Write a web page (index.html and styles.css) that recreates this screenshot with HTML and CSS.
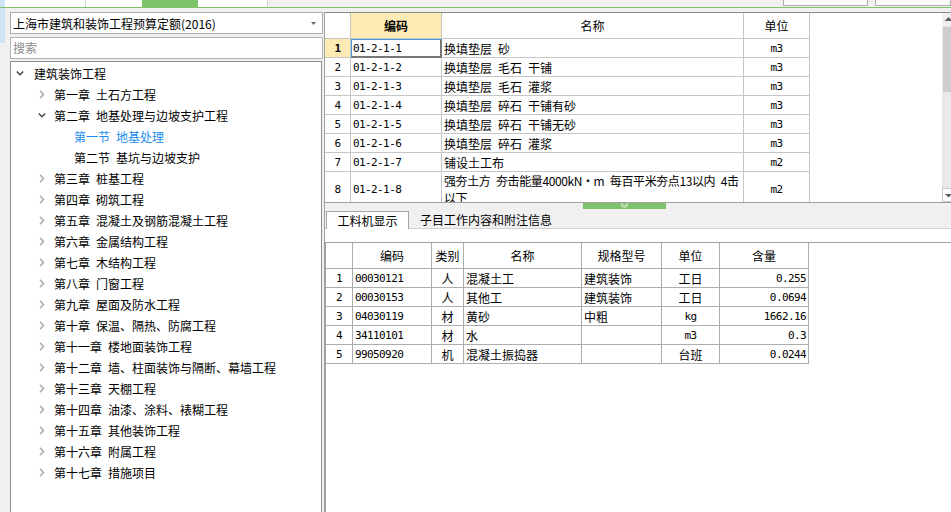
FILE: index.html
```html
<!DOCTYPE html>
<html lang="zh-CN">
<head>
<meta charset="utf-8">
<title>定额</title>
<link rel="stylesheet" href="styles.css">
</head>
<body>
<div class="app">
  <div class="topbar">
    <div class="tb-blue"></div>
    <div class="tb-white w80"></div>
    <div class="tb-sep"></div>
    <div class="tb-white w56"></div>
    <div class="tb-green"></div>
    <div class="tb-white w70"></div>
    <div class="tb-btn b1"></div>
    <div class="tb-btn b2"></div>
  </div>
  <div class="greenline"></div>
  <div class="main">
    <div class="left">
      <div class="combo"><span>上海市建筑和装饰工程预算定额(2016)</span><svg width="5" height="3" viewBox="0 0 5 3"><polygon points="0,0 5,0 2.5,3" fill="#6a6a6a"/></svg></div>
      <div class="search">搜索</div>
      <div class="tree">
        <div class="node l0"><svg viewBox="0 0 8 9"><polyline class="ex" points="0.8,2.5 4,5.7 7.2,2.5"/></svg>建筑装饰工程</div>
        <div class="node l1"><svg viewBox="0 0 8 9"><polyline class="co" points="2,0.8 5.5,4.5 2,8.2"/></svg>第一章&ensp;土石方工程</div>
        <div class="node l1"><svg viewBox="0 0 8 9"><polyline class="ex" points="0.8,2.5 4,5.7 7.2,2.5"/></svg>第二章&ensp;地基处理与边坡支护工程</div>
        <div class="node l2 sel">第一节&ensp;地基处理</div>
        <div class="node l2">第二节&ensp;基坑与边坡支护</div>
        <div class="node l1"><svg viewBox="0 0 8 9"><polyline class="co" points="2,0.8 5.5,4.5 2,8.2"/></svg>第三章&ensp;桩基工程</div>
        <div class="node l1"><svg viewBox="0 0 8 9"><polyline class="co" points="2,0.8 5.5,4.5 2,8.2"/></svg>第四章&ensp;砌筑工程</div>
        <div class="node l1"><svg viewBox="0 0 8 9"><polyline class="co" points="2,0.8 5.5,4.5 2,8.2"/></svg>第五章&ensp;混凝土及钢筋混凝土工程</div>
        <div class="node l1"><svg viewBox="0 0 8 9"><polyline class="co" points="2,0.8 5.5,4.5 2,8.2"/></svg>第六章&ensp;金属结构工程</div>
        <div class="node l1"><svg viewBox="0 0 8 9"><polyline class="co" points="2,0.8 5.5,4.5 2,8.2"/></svg>第七章&ensp;木结构工程</div>
        <div class="node l1"><svg viewBox="0 0 8 9"><polyline class="co" points="2,0.8 5.5,4.5 2,8.2"/></svg>第八章&ensp;门窗工程</div>
        <div class="node l1"><svg viewBox="0 0 8 9"><polyline class="co" points="2,0.8 5.5,4.5 2,8.2"/></svg>第九章&ensp;屋面及防水工程</div>
        <div class="node l1"><svg viewBox="0 0 8 9"><polyline class="co" points="2,0.8 5.5,4.5 2,8.2"/></svg>第十章&ensp;保温、隔热、防腐工程</div>
        <div class="node l1"><svg viewBox="0 0 8 9"><polyline class="co" points="2,0.8 5.5,4.5 2,8.2"/></svg>第十一章&ensp;楼地面装饰工程</div>
        <div class="node l1"><svg viewBox="0 0 8 9"><polyline class="co" points="2,0.8 5.5,4.5 2,8.2"/></svg>第十二章&ensp;墙、柱面装饰与隔断、幕墙工程</div>
        <div class="node l1"><svg viewBox="0 0 8 9"><polyline class="co" points="2,0.8 5.5,4.5 2,8.2"/></svg>第十三章&ensp;天棚工程</div>
        <div class="node l1"><svg viewBox="0 0 8 9"><polyline class="co" points="2,0.8 5.5,4.5 2,8.2"/></svg>第十四章&ensp;油漆、涂料、裱糊工程</div>
        <div class="node l1"><svg viewBox="0 0 8 9"><polyline class="co" points="2,0.8 5.5,4.5 2,8.2"/></svg>第十五章&ensp;其他装饰工程</div>
        <div class="node l1"><svg viewBox="0 0 8 9"><polyline class="co" points="2,0.8 5.5,4.5 2,8.2"/></svg>第十六章&ensp;附属工程</div>
        <div class="node l1"><svg viewBox="0 0 8 9"><polyline class="co" points="2,0.8 5.5,4.5 2,8.2"/></svg>第十七章&ensp;措施项目</div>
      </div>
    </div>
    <div class="right">
      <div class="grid-top">
        <div class="gt-body">
          <div class="gt-table">
            <div class="hd"></div>
            <div class="hd ycode">编码</div>
            <div class="hd">名称</div>
            <div class="hd">单位</div>

            <div class="num cur mono">1</div>
            <div class="code mono focus">01-2-1-1</div>
            <div class="name">换填垫层&ensp;砂</div>
            <div class="unit mono">m3</div>

            <div class="num mono">2</div>
            <div class="code mono">01-2-1-2</div>
            <div class="name">换填垫层&ensp;毛石&ensp;干铺</div>
            <div class="unit mono">m3</div>

            <div class="num mono">3</div>
            <div class="code mono">01-2-1-3</div>
            <div class="name">换填垫层&ensp;毛石&ensp;灌浆</div>
            <div class="unit mono">m3</div>

            <div class="num mono">4</div>
            <div class="code mono">01-2-1-4</div>
            <div class="name">换填垫层&ensp;碎石&ensp;干铺有砂</div>
            <div class="unit mono">m3</div>

            <div class="num mono">5</div>
            <div class="code mono">01-2-1-5</div>
            <div class="name">换填垫层&ensp;碎石&ensp;干铺无砂</div>
            <div class="unit mono">m3</div>

            <div class="num mono">6</div>
            <div class="code mono">01-2-1-6</div>
            <div class="name">换填垫层&ensp;碎石&ensp;灌浆</div>
            <div class="unit mono">m3</div>

            <div class="num mono">7</div>
            <div class="code mono">01-2-1-7</div>
            <div class="name">铺设土工布</div>
            <div class="unit mono">m2</div>

            <div class="num mono">8</div>
            <div class="code mono">01-2-1-8</div>
            <div class="name wrap">强夯土方&ensp;夯击能量4000kN·m&ensp;每百平米夯点13以内&ensp;4击<br>以下</div>
            <div class="unit mono">m2</div>
          </div>
        </div>
        <div class="vscroll">
          <div class="vs-up"><svg width="9" height="13" viewBox="0 0 9 13"><polygon points="2.5,8 6.5,4 10.5,8" fill="#5f5f5f"/></svg></div>
          <div class="vs-thumb"></div>
          <div class="vs-track"></div>
          <div class="vs-down"><svg width="8" height="12" viewBox="0 0 8 12"><polygon points="2,5 9,5 5.5,8.5" fill="#5f5f5f"/></svg></div>
        </div>
      </div>
      <div class="splitter">
        <div class="handle"><svg width="9" height="5" viewBox="0 0 9 5"><polyline points="1,0.5 4.5,2.5 8,0.5" /><polyline points="1,2.5 4.5,4.5 8,2.5" /></svg></div>
      </div>
      <div class="tabs">
        <div class="tab active">工料机显示</div>
        <div class="tab">子目工作内容和附注信息</div>
      </div>
      <div class="panel">
        <div class="grid-bot">
          <div class="gb-table">
            <div class="bh"></div>
            <div class="bh">编码</div>
            <div class="bh">类别</div>
            <div class="bh">名称</div>
            <div class="bh">规格型号</div>
            <div class="bh">单位</div>
            <div class="bh">含量</div>

            <div class="bnum mono">1</div>
            <div class="bcode mono">00030121</div>
            <div class="bcat">人</div>
            <div class="btxt">混凝土工</div>
            <div class="btxt">建筑装饰</div>
            <div class="bunit">工日</div>
            <div class="bqty mono">0.255</div>

            <div class="bnum mono">2</div>
            <div class="bcode mono">00030153</div>
            <div class="bcat">人</div>
            <div class="btxt">其他工</div>
            <div class="btxt">建筑装饰</div>
            <div class="bunit">工日</div>
            <div class="bqty mono">0.0694</div>

            <div class="bnum mono">3</div>
            <div class="bcode mono">04030119</div>
            <div class="bcat">材</div>
            <div class="btxt">黄砂</div>
            <div class="btxt">中粗</div>
            <div class="bunit mono">kg</div>
            <div class="bqty mono">1662.16</div>

            <div class="bnum mono">4</div>
            <div class="bcode mono">34110101</div>
            <div class="bcat">材</div>
            <div class="btxt">水</div>
            <div class="btxt"></div>
            <div class="bunit mono">m3</div>
            <div class="bqty mono">0.3</div>

            <div class="bnum mono">5</div>
            <div class="bcode mono">99050920</div>
            <div class="bcat">机</div>
            <div class="btxt">混凝土振捣器</div>
            <div class="btxt"></div>
            <div class="bunit">台班</div>
            <div class="bqty mono">0.0244</div>
          </div>
        </div>
      </div>
    </div>
  </div>
</div>
</body>
</html>
```

FILE: styles.css
```css
* { box-sizing: border-box; }
html, body { margin: 0; padding: 0; }
body {
  width: 951px;
  height: 512px;
  overflow: hidden;
  background: #f0f0f0;
  font-family: "Noto Sans CJK SC", "Noto Sans", sans-serif;
  font-size: 12px;
  color: #000;
}
.app { display: flex; flex-direction: column; height: 512px; overflow: hidden; }

/* top strip */
.topbar { display: flex; height: 7px; flex: none; background: #f0f0f0; }
.tb-blue { width: 5px; background: #cfe4f5; }
.tb-white { background: #fff; }
.w80 { width: 80px; }
.w56 { width: 56px; }
.w70 { width: 70px; border-right: 1px solid #d4d4d4; }
.tb-sep { width: 1px; background: #c5e2bc; }
.tb-green { width: 56px; background: #7dc36b; }
.tb-btn { height: 6px; border: 1px solid #adadad; border-top: 0; background: #fbfbfb; }
.b1 { width: 85px; margin-left: auto; }
.b2 { width: 76px; margin-left: 7px; }
.greenline { height: 1px; flex: none; background: #7dc36b; }

.main { display: flex; flex: 1; min-height: 0; }

/* left panel */
.left {
  width: 324px;
  flex: none;
  padding: 4px 0 0 10px;
  display: flex;
  flex-direction: column;
  background: linear-gradient(#cfe4f5, #cfe4f5) 0 0 / 5px 35px no-repeat, #f0f0f0;
}
.combo {
  width: 313px;
  height: 22px;
  flex: none;
  border: 1px solid #acacac;
  background: #fff;
  display: flex;
  align-items: center;
  justify-content: space-between;
  padding-left: 2px;
  white-space: nowrap;
}
.combo svg { margin-right: 6px; }
.search {
  width: 313px;
  height: 22px;
  flex: none;
  margin-top: 3px;
  border: 1px solid #b4b4b4;
  background: #fff;
  color: #8c8c8c;
  padding-left: 2px;
  line-height: 20px;
}
.tree {
  width: 312px;
  height: 470px;
  flex: none;
  margin-top: 2px;
  border: 1px solid #8e8e8e;
  background: #fff;
  padding-top: 1px;
}
.node { height: 21px; display: flex; align-items: center; white-space: nowrap; }
.l0 { padding-left: 5px; }
.l1 { padding-left: 27px; }
.l2 { padding-left: 63px; }
.node svg { width: 8px; height: 9px; flex: none; margin-right: 10px; }
.l1 svg { margin-right: 8px; }
.node polyline { fill: none; stroke-width: 1.5; }
.node .ex { stroke: #444; }
.node .co { stroke: #a9a9a9; }
.node.sel { color: #1a8cf0; }

/* right panel */
.right {
  flex: 1;
  min-width: 0;
  margin-top: 4px;
  border-left: 1px solid #a0a0a0;
  display: flex;
  flex-direction: column;
}
.grid-top {
  height: 191px;
  flex: none;
  display: flex;
  border-top: 1px solid #8a8a8a;
  border-bottom: 1px solid #a0a0a0;
  background: #fff;
}
.gt-body { flex: 1; overflow: hidden; }
.gt-table {
  display: grid;
  grid-template-columns: 26px 91px 302px 66px;
  grid-template-rows: 26px repeat(7, 19px) 36px;
  width: 485px;
}
.gt-table > div {
  border-right: 1px solid #c6c6c6;
  border-bottom: 1px solid #c6c6c6;
  display: flex;
  align-items: center;
  overflow: hidden;
  white-space: nowrap;
}
.gt-table .hd { justify-content: center; background: #fff; }
.gt-table .ycode { background: #fdeab4; font-weight: 700; }
.gt-table .num { justify-content: center; }
.gt-table .cur { background: #fdeab4; font-weight: 700; }
.gt-table .code { padding-left: 2px; }
.gt-table .name { padding-left: 2px; }
.gt-table .wrap { display: block; line-height: 17px; letter-spacing: -0.4px; }
.gt-table .unit { justify-content: center; }
.gt-table .focus {
  border-right-color: #787878;
  border-bottom-color: #787878;
  box-shadow: inset 1px 1px 0 #3c9bd8, inset -1px -1px 0 #787878;
}
.mono {
  font-family: "DejaVu Sans Mono", "Liberation Mono", monospace;
  font-size: 11px;
  letter-spacing: -0.6px;
}

.vscroll {
  width: 9px;
  flex: none;
  background: #e9e9e9;
  display: flex;
  flex-direction: column;
  overflow: hidden;
}
.vs-up { height: 13px; flex: none; background: #f0f0f0; }
.vs-up svg, .vs-down svg { display: block; }
.vs-thumb { height: 65px; flex: none; margin-top: 1px; margin-left: 1px; background: #cdcdcd; }
.vs-track { flex: 1; }
.vs-down { height: 14px; flex: none; background: #fff; border: 1px solid #c8c8c8; border-right: 0; }

.splitter { height: 6px; flex: none; }
.handle {
  margin-left: 258px;
  width: 83px;
  height: 6px;
  background: #7dc36b;
  display: flex;
  justify-content: center;
}
.handle polyline { fill: none; stroke: #e6f3e0; stroke-width: 1; }

.tabs {
  height: 20px;
  flex: none;
  display: flex;
  align-items: flex-end;
  padding-top: 2px;
  border-bottom: 1px solid #d2d2d2;
}
.tab { height: 18px; margin-bottom: -1px; padding: 0 0 0 11px; line-height: 17px; white-space: nowrap; }
.tab.active {
  width: 83px;
  margin-left: 1px;
  padding: 0;
  text-align: center;
  background: #fff;
  border: 1px solid #a6a6a6;
  border-bottom: 0;
}

.panel { flex: 1; min-height: 0; background: #fff; padding-top: 13px; }
.grid-bot { height: 100%; border-top: 1px solid #a0a0a0; border-left: 1px solid #a0a0a0; }
.gb-table {
  display: grid;
  grid-template-columns: 27px 79px 32px 118px 80px 58px 89px;
  grid-template-rows: 26px repeat(5, 19px);
  width: 483px;
}
.gb-table > div {
  border-right: 1px solid #adadad;
  border-bottom: 1px solid #adadad;
  display: flex;
  align-items: center;
  overflow: hidden;
  white-space: nowrap;
}
.gb-table .bh { justify-content: center; }
.gb-table .bnum { justify-content: center; }
.gb-table .bcode { padding-left: 2px; }
.gb-table .bcat { justify-content: center; }
.gb-table .btxt { padding-left: 2px; }
.gb-table .bunit { justify-content: center; }
.gb-table .bqty { justify-content: flex-end; padding-right: 2px; }
```
